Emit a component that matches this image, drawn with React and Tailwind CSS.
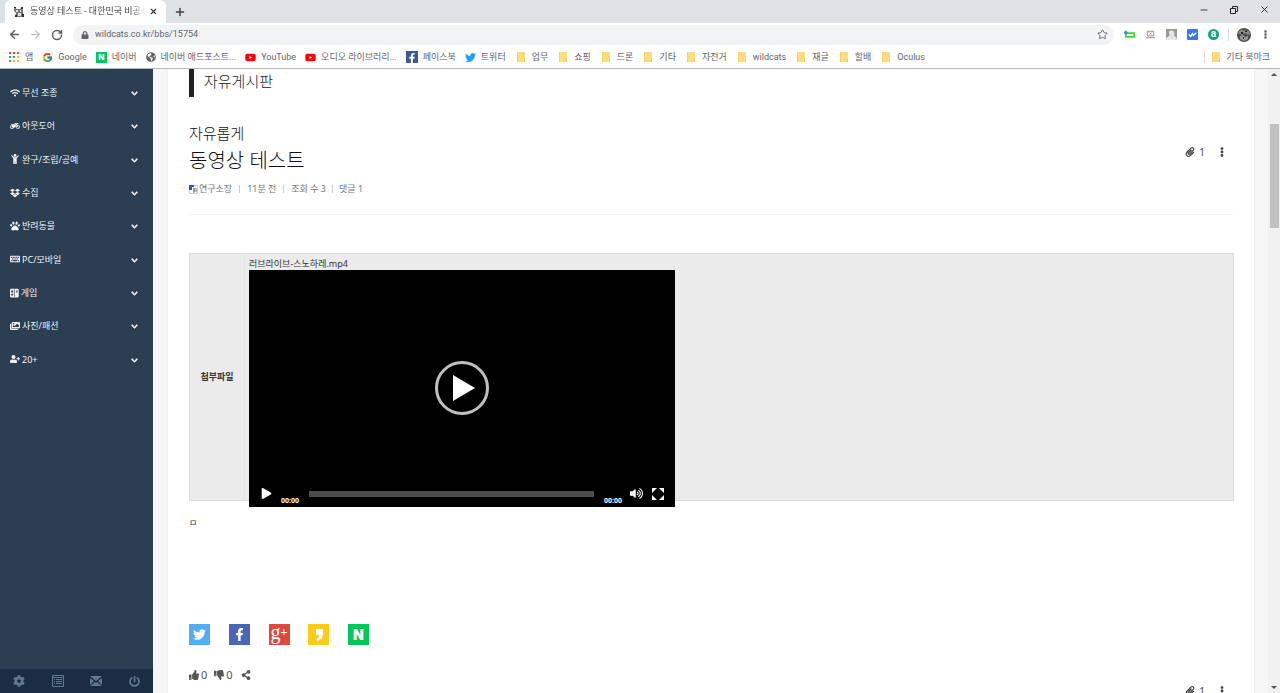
import React from 'react';
import {
  FaWifi, FaMotorcycle, FaDropbox, FaPaw, FaKeyboard, FaImages, FaUserPlus, FaChild, FaCog,
  FaTwitter, FaFacebookF, FaThumbsUp, FaThumbsDown, FaShareAlt, FaPaperclip,
  FaChevronDown, FaPowerOff, FaYoutube, FaLock, FaEllipsisV, FaPlay, FaVolumeUp, FaGlobeAmericas,
} from 'react-icons/fa';
import { FcGoogle } from 'react-icons/fc';
import { ArrowLeft, ArrowRight, RotateCw, Star, X, Plus, Minus } from 'lucide-react';

const KeypadIcon = ({ className }) => (
  <svg viewBox="0 0 14 16" className={className} fill="currentColor">
    <path fillRule="evenodd" d="M2 1h10a2 2 0 0 1 2 2v10a2 2 0 0 1-2 2H2a2 2 0 0 1-2-2V3a2 2 0 0 1 2-2zm0 3v3h3V4zm0 5v3h3V9zm5-7v12h1V2zm3 2v3h2V4z" />
  </svg>
);

const FolderIcon = () => (
  <svg viewBox="0 0 12 12" className="size-3 shrink-0">
    <path d="M2 1h8v10H2z" fill="#fddc7c" />
    <path d="M9 8h1v3H9z" fill="#f3c74f" />
    <path d="M2 1h1v10H2z" fill="#f8cf62" />
  </svg>
);

const AppsIcon = () => (
  <svg viewBox="0 0 12 12" className="size-3 shrink-0">
    <path d="M1 1h2v2H1zM5 1h2v2H5zM9 1h2v2H9z" fill="#ea4335" />
    <path d="M1 5h2v2H1z" fill="#34a853" />
    <path d="M5 5h2v2H5z" fill="#4285f4" />
    <path d="M9 5h2v2H9zM5 9h2v2H5zM9 9h2v2H9z" fill="#fbbc05" />
    <path d="M1 9h2v2H1z" fill="#34a853" />
  </svg>
);

const NaverIcon = ({ className }) => (
  <span className={`flex shrink-0 items-center justify-center bg-[#03c75a] font-['Inter',sans-serif] font-black text-white ${className}`}>N</span>
);

const FacebookIcon = () => (
  <span className="flex size-3 shrink-0 items-end justify-center bg-[#3b5998] text-white">
    <FaFacebookF className="size-[10px]" />
  </span>
);

const YoutubeIcon = () => <FaYoutube className="size-[11px] shrink-0 text-[#f00]" />;

const BOOKMARKS = [
  { label: '앱', icon: <AppsIcon /> },
  { label: 'Google', icon: <FcGoogle className="size-[11px] shrink-0" /> },
  { label: '네이버', icon: <NaverIcon className="size-[11px] text-[8px]" /> },
  { label: '네이버 애드포스트...', icon: <FaGlobeAmericas className="size-[10px] shrink-0" /> },
  { label: 'YouTube', icon: <YoutubeIcon /> },
  { label: '오디오 라이브러리...', icon: <YoutubeIcon /> },
  { label: '페이스북', icon: <FacebookIcon /> },
  { label: '트위터', icon: <FaTwitter className="size-[11px] shrink-0 text-[#1da1f2]" /> },
  { label: '업무', icon: <FolderIcon /> },
  { label: '쇼핑', icon: <FolderIcon /> },
  { label: '드론', icon: <FolderIcon /> },
  { label: '기타', icon: <FolderIcon /> },
  { label: '자전거', icon: <FolderIcon /> },
  { label: 'wildcats', icon: <FolderIcon /> },
  { label: '재글', icon: <FolderIcon /> },
  { label: '할배', icon: <FolderIcon /> },
  { label: 'Oculus', icon: <FolderIcon /> },
];

const MENU = [
  { label: '무선 조종', icon: FaWifi },
  { label: '아웃도어', icon: FaMotorcycle },
  { label: '완구/조립/공예', icon: FaChild },
  { label: '수집', icon: FaDropbox },
  { label: '반려동물', icon: FaPaw },
  { label: 'PC/모바일', icon: FaKeyboard },
  { label: '게임', icon: KeypadIcon },
  { label: '사진/패션', icon: FaImages },
  { label: '20+', icon: FaUserPlus },
];

const CatIcon = () => (
  <svg viewBox="0 0 12 12" className="size-3 shrink-0">
    <path d="M1 1l3 2h3l3-2v5l1 5H2l1-4-2-2z" fill="#777" />
    <path d="M3 4h2v2H3zM7 4h1v2H7zM5 7h3v3H5z" fill="#ddd" />
    <path d="M1 1h2v1H1zM8 1h2v2H8zM2 9h2v2H2zM9 8h2v3H9z" fill="#333" />
  </svg>
);

function BrowserBar() {
  return (
    <header className="shrink-0 border-b border-[#b6b9bc] bg-white font-['Roboto','Noto_Sans_CJK_KR',sans-serif] text-[#5f6368]">
      <div className="flex h-[23px] items-end bg-[#dee1e6] pl-[5px]">
        <div className="flex h-[23px] w-[161px] items-center rounded-t-md bg-white pr-2 pl-2">
          <CatIcon />
          <span className="ml-[5px] flex-1 overflow-hidden mask-r-from-90% text-[9px] whitespace-nowrap text-[#45484c]">동영상 테스트 - 대한민국 비공식</span>
          <button type="button" aria-label="탭 닫기" className="ml-1"><X className="size-[9px] text-[#333]" strokeWidth={3} /></button>
        </div>
        <button type="button" aria-label="새 탭" className="ml-2 self-center"><Plus className="size-3 text-[#3c4043]" strokeWidth={3} /></button>
        <div className="ml-auto flex items-center gap-5 self-center pr-[10px] pb-1 text-[#222]">
          <button type="button" aria-label="최소화"><Minus className="size-[10px]" /></button>
          <button type="button" aria-label="이전 크기로">
            <svg viewBox="0 0 10 10" className="size-[10px]" fill="none" stroke="currentColor"><path d="M1.500 3.500h5v5h-5zM3.500 3V1.500h5v5H7" /></svg>
          </button>
          <button type="button" aria-label="닫기"><X className="size-[11px]" /></button>
        </div>
      </div>

      <div className="flex h-[23px] items-center pr-[10px] pl-2">
        <button type="button" aria-label="뒤로"><ArrowLeft className="size-[13px]" strokeWidth={3} /></button>
        <button type="button" aria-label="앞으로" className="ml-2"><ArrowRight className="size-[13px] text-[#b8babd]" /></button>
        <button type="button" aria-label="새로고침" className="ml-[9px]"><RotateCw className="size-3" strokeWidth={3} /></button>
        <div className="ml-[10px] flex h-5 flex-1 items-center rounded-full bg-[#f1f3f4] pr-[6px] pl-2">
          <FaLock className="size-2" />
          <input
            aria-label="주소"
            readOnly
            value="wildcats.co.kr/bbs/15754"
            className="ml-[6px] flex-1 bg-transparent text-[9px] text-[#5f6368] outline-none"
          />
          <button type="button" aria-label="북마크 추가"><Star className="size-[11px]" /></button>
        </div>
        <div className="ml-[10px] flex items-center gap-[10px]">
          <svg viewBox="0 0 12 12" className="size-[11px]"><path d="M2 4.500h9v4H2z" fill="none" stroke="#43d62e" strokeWidth="2" /><path d="M0 4h4M2 2v4" stroke="#2b8de8" strokeWidth="2" /></svg>
          <svg viewBox="0 0 12 12" className="size-[11px]" fill="none" stroke="#85888c"><path d="M2.500 2.500h7v5h-7zM1 9.500h10M5 4l2 2M7 4l-2 2" /></svg>
          <svg viewBox="0 0 12 12" className="size-[11px]"><path d="M0 0h12v12H0z" fill="#999" /><path d="M3 3q3-3 6 0v4l3 3v2H0v-2l4-3z" fill="#e5e5e5" /></svg>
          <svg viewBox="0 0 12 12" className="size-[11px]"><rect width="12" height="12" rx="1" fill="#3b78e7" /><path d="M2 6l2 2 2-3 1 2 3-3" fill="none" stroke="#fff" strokeWidth="1.500" /></svg>
          <span className="flex size-[11px] items-center justify-center rounded-full bg-[#11a683] pb-px text-[10px] leading-none font-bold text-white">a</span>
        </div>
        <span className="ml-[9px] h-3 w-px bg-[#dadce0]" />
        <svg viewBox="0 0 14 14" className="ml-2 size-[14px]"><circle cx="7" cy="7" r="7" fill="#4d4d4d" /><path d="M1 5q2-4 5-3t6 1l1 3-2 1-3-2-3 2z" fill="#8a8a8a" /><path d="M3 8l3-1 2 2 3-1v3l-4 2-4-2z" fill="#999" /><path d="M4 4h2v2H4zM8 3h2v1H8zM6 9h1v2H6z" fill="#222" /></svg>
        <button type="button" aria-label="메뉴" className="ml-[10px]"><FaEllipsisV className="size-[9px]" /></button>
      </div>

      <nav className="flex h-[22px] items-center gap-[9px] pr-[10px] pl-2 text-[9px] leading-3">
        {BOOKMARKS.map((b) => (
          <a key={b.label} href="#" className="flex items-center gap-[5px] whitespace-nowrap">
            {b.icon}
            {b.label}
          </a>
        ))}
        <a href="#" className="ml-auto flex items-center gap-1 border-l border-[#dadce0] pl-[5px] whitespace-nowrap">
          <FolderIcon />
          기타 북마크
        </a>
      </nav>
    </header>
  );
}

function Sidebar() {
  return (
    <aside className="flex w-[153px] shrink-0 flex-col bg-[#2c3e52] text-[#f0f3f6]">
      <nav className="mt-[7px] flex h-[300px] flex-col">
        {MENU.map(({ label, icon: Icon }) => (
          <a key={label} href="#" className="flex flex-1 items-center pr-[15px] pl-[10px] text-[9px]">
            <Icon className="mr-[2px] h-[10px] w-auto" />
            {label}
            <FaChevronDown className="mt-[2px] ml-auto size-[7px]" stroke="currentColor" strokeWidth="50" />
          </a>
        ))}
      </nav>
      <div className="mt-auto flex h-6 items-center justify-between bg-[#1a2d45] px-[13px] text-[#607890]">
        <button type="button" aria-label="설정"><FaCog className="size-3" /></button>
        <button type="button" aria-label="목록">
          <svg viewBox="0 0 12 12" className="size-3" fill="none" stroke="currentColor"><path d="M.5.5h11v11H.5zM1 2.500h10M2 4.500h1M2 6.500h1M2 8.500h1M4 4.500h6M4 6.500h6M4 8.500h6" /></svg>
        </button>
        <button type="button" aria-label="쪽지">
          <svg viewBox="0 0 12 12" className="size-3" fill="currentColor"><path d="M0 1h12L6 6zM0 3l4 3-4 4zM12 3L8 6l4 4zM5 7l1 1 1-1 5 4H0z" /></svg>
        </button>
        <button type="button" aria-label="로그아웃"><FaPowerOff className="size-[11px]" /></button>
      </div>
    </aside>
  );
}

function PostTools() {
  return (
    <div className="flex items-center text-[10px] leading-4 text-[#444]">
      <FaPaperclip className="size-[10px]" />
      <span className="ml-[4px]">1</span>
      <button type="button" aria-label="더보기" className="ml-3"><FaEllipsisV className="size-[10px]" /></button>
    </div>
  );
}

function VideoPlayer() {
  return (
    <div className="relative -mb-[10px] flex h-[237px] w-[426px] flex-col bg-black text-white">
      <div className="flex flex-1 items-end justify-center">
        <button type="button" aria-label="동영상 재생" className="flex size-[54px] items-center justify-center rounded-full border-[3px] border-[#c0c0c0]">
          <svg viewBox="0 0 24 26" className="ml-1 h-[26px] w-6"><path d="M1 0l22 13L1 26z" fill="#fff" /></svg>
        </button>
      </div>
      <div className="mt-[65px] flex h-[27px] items-center pr-[11px] pl-3 text-[7px] font-bold">
        <button type="button" aria-label="재생"><FaPlay className="size-[11px]" /></button>
        <span className="mt-4 ml-[9px]">00:00</span>
        <div className="mx-[10px] h-[6px] flex-1 bg-[#4c4c4c]" />
        <span className="mt-4">00:00</span>
        <button type="button" aria-label="음소거" className="ml-2"><FaVolumeUp className="size-[13px]" /></button>
        <button type="button" aria-label="전체 화면" className="ml-[9px]">
          <svg viewBox="0 0 12 12" className="size-3" fill="#fff"><path d="M0 0h5L0 5zM7 0h5v5zM0 7l5 5H0zM12 7v5H7z" /></svg>
        </button>
      </div>
    </div>
  );
}

function Share() {
  const box = 'flex size-[21px] items-center justify-center text-white';
  return (
    <div className="flex w-[180px] justify-between">
      <a href="#" aria-label="트위터" className={`${box} bg-[#55acee]`}><FaTwitter className="size-[13px]" /></a>
      <a href="#" aria-label="페이스북" className={`${box} bg-[#4a66b7]`}><FaFacebookF className="size-[13px]" /></a>
      <a href="#" aria-label="구글 플러스" className={`${box} bg-[#dc4a3d] font-['Liberation_Serif',serif] text-[20px] leading-none`}>
        <span className="pb-[5px]">g</span>
        <span className="pb-[5px] text-[12px] font-bold">+</span>
      </a>
      <a href="#" aria-label="카카오스토리" className={`${box} bg-[#fbcb18]`}>
        <svg viewBox="0 0 10 12" className="h-3 w-[10px]" fill="#fff"><path d="M2 0h7v5q0 5-5 7L2 10q3-1 3-4H2z" /></svg>
      </a>
      <a href="#" aria-label="네이버"><NaverIcon className="size-[21px] text-[14px]" /></a>
    </div>
  );
}

function Post() {
  return (
    <main className="flex-1 overflow-hidden bg-[#f6f6f6] pr-[13px] pl-[14px]">
      <article className="h-full border-x border-[#f0f0f0] bg-white pr-5 pl-[21px] text-[#333]">
        <h2 className="h-7 border-l-[5px] border-[#222] pl-[10px] text-[15px] leading-6 font-light text-[#222]">자유게시판</h2>

        <div className="mt-[26px] flex items-start justify-between pr-[7px]">
          <div>
            <p className="text-[15px] leading-5 font-light text-[#111]">자유롭게</p>
            <h1 className="mt-1 text-[20px] leading-7 font-light text-[#111]">동영상 테스트</h1>
          </div>
          <div className="pt-[21px]">
            <PostTools />
          </div>
        </div>

        <div className="mt-2 flex items-center border-b border-[#f4f4f4] pb-[19px] text-[9px] leading-3 text-[#777]">
          <svg viewBox="0 0 9 9" className="mr-px size-[9px]"><path d="M.5.5h8v8h-8z" fill="#fff" stroke="#ccc" /><path d="M0 0h5v2H3v3H0z" fill="#2455d6" /><path d="M4 4h4M4 6h4M5 3v5" stroke="#777" /></svg>
          <span>연구소장</span>
          <span className="mx-[7px] h-2 w-px bg-[#ccc]" />
          <span>11분 전</span>
          <span className="mx-[7px] h-2 w-px bg-[#ccc]" />
          <span>조회 수 3</span>
          <span className="mx-[6px] h-2 w-px bg-[#ccc]" />
          <span>댓글 1</span>
        </div>

        <table className="mt-[38px] w-full border border-[#dcdcdc] bg-[#ebebeb]">
          <tbody>
            <tr>
              <th scope="row" className="w-[55px] border-r border-[#e4e4e4] text-[9px] font-bold">첨부파일</th>
              <td className="px-1 pt-1">
                <p className="text-[9px] leading-3">러브라이브-스노하레.mp4</p>
                <VideoPlayer />
                <div className="h-[3px]" />
              </td>
            </tr>
          </tbody>
        </table>

        <p className="mt-[14px] text-[9px] leading-4">ㅁ</p>

        <div className="mt-[93px]">
          <Share />
        </div>

        <div className="mt-[22px] flex items-center text-[11px] leading-4 text-[#555]">
          <button type="button" className="flex items-center gap-[2px]"><FaThumbsUp className="size-[10px]" />0</button>
          <button type="button" className="ml-[7px] flex items-center gap-[2px]"><FaThumbsDown className="size-[10px]" />0</button>
          <button type="button" aria-label="공유" className="ml-2"><FaShareAlt className="size-[10px]" /></button>
        </div>
        <div className="flex justify-end pr-[7px]">
          <PostTools />
        </div>
      </article>
    </main>
  );
}

function Scrollbar() {
  return (
    <div className="flex w-3 shrink-0 flex-col items-center bg-[#f1f1f1] py-1">
      <svg viewBox="0 0 6 3" className="h-[3px] w-[6px]"><path d="M0 3l3-3 3 3z" fill="#505050" /></svg>
      <div className="mt-12 h-[104px] w-[9px] bg-[#c1c1c1]" />
      <svg viewBox="0 0 6 3" className="mt-auto h-[3px] w-[6px]"><path d="M0 0h6L3 3z" fill="#505050" /></svg>
    </div>
  );
}

export default function App() {
  return (
    <div className="flex h-screen flex-col overflow-hidden bg-white font-['Noto_Sans','Noto_Sans_CJK_KR',sans-serif]">
      <BrowserBar />
      <div className="flex min-h-0 flex-1">
        <Sidebar />
        <Post />
        <Scrollbar />
      </div>
    </div>
  );
}
